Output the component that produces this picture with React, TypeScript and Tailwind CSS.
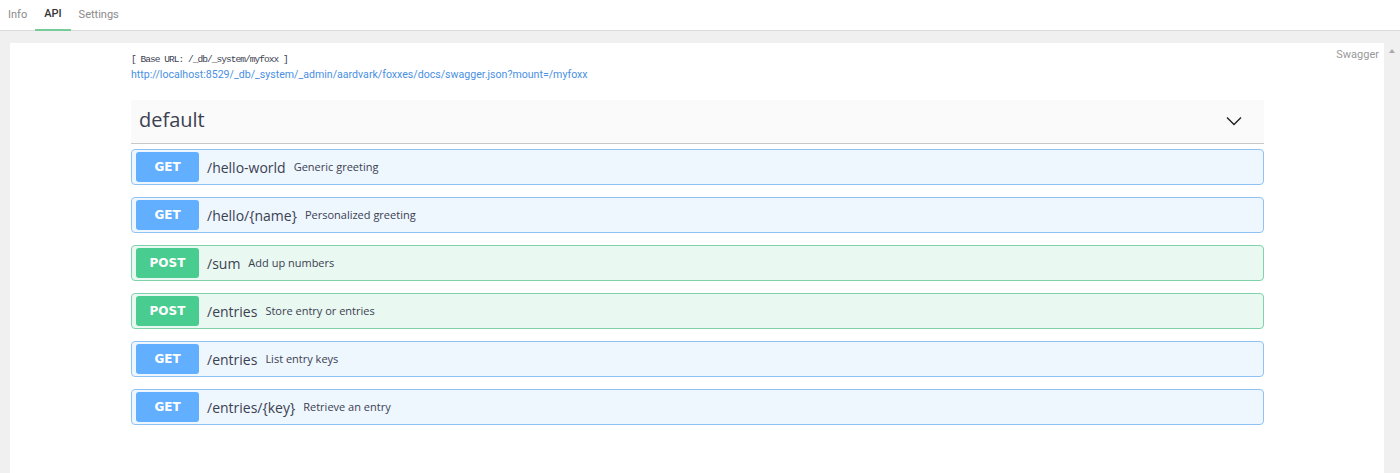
import React from 'react'

type Method = 'GET' | 'POST'

interface Operation {
  method: Method
  path: string
  summary: string
}

const operations: Operation[] = [
  { method: 'GET', path: '/hello-world', summary: 'Generic greeting' },
  { method: 'GET', path: '/hello/{name}', summary: 'Personalized greeting' },
  { method: 'POST', path: '/sum', summary: 'Add up numbers' },
  { method: 'POST', path: '/entries', summary: 'Store entry or entries' },
  { method: 'GET', path: '/entries', summary: 'List entry keys' },
  { method: 'GET', path: '/entries/{key}', summary: 'Retrieve an entry' },
]

function OperationRow({ op }: { op: Operation }) {
  const isGet = op.method === 'GET'
  return (
    <div
      className={`flex items-center h-[36px] mb-[12px] px-[4px] rounded-[4px] border ${
        isGet ? 'bg-[#eef6fe] border-[#8fc3f5]' : 'bg-[#e9f8f0] border-[#7fd3ab]'
      }`}
    >
      <span
        className={`flex items-center justify-center w-[63px] h-[30px] rounded-[3px] text-white text-[12px] font-bold font-['DejaVu_Sans',sans-serif] ${
          isGet ? 'bg-[#61affe]' : 'bg-[#49cc90]'
        }`}
      >
        {op.method}
      </span>
      <span className="ml-[8px] text-[14px] text-[#3b4151] font-['Open_Sans',sans-serif]">
        {op.path}
      </span>
      <span className="ml-[8px] text-[11px] text-[#3b4151] font-['Open_Sans',sans-serif]">
        {op.summary}
      </span>
    </div>
  )
}

export default function App() {
  return (
    <div className="w-[1400px] h-[473px] overflow-hidden bg-[#f0f0f0] flex flex-col font-['Roboto',sans-serif]">
      {/* 탭 바 */}
      <div className="h-[31px] bg-white border-b border-[#dcdcdc] flex items-stretch pl-[8px] text-[11px]">
        <div className="flex items-center text-[#8a8a8a] pr-[8px]">Info</div>
        <div className="flex items-center px-[9px] text-[#333] font-medium border-b-2 border-[#77cb99] -mb-px">
          API
        </div>
        <div className="flex items-center pl-[8px] text-[#8a8a8a]">Settings</div>
      </div>

      <div className="flex flex-1 pt-[12px]">
        <div className="ml-[10px] w-[1374px] bg-white flex">
          <div className="w-[121px]" />
          <div className="flex-1 pt-[11px]">
            <div className="font-['Liberation_Mono',monospace] text-[9.5px] tracking-[-0.95px] text-[#3b4151] leading-[12px]">
              [ Base URL: /_db/_system/myfoxx ]
            </div>
            <div className="text-[10.6px] text-[#4990e2] leading-[14px] mt-[2px]">
              http://localhost:8529/_db/_system/_admin/aardvark/foxxes/docs/swagger.json?mount=/myfoxx
            </div>

            {/* default 섹션 */}
            <div className="mt-[18px] h-[44px] bg-[#fafafa] border-b border-[#c8c8c8] flex items-center justify-between pl-[8px] pr-[22px]">
              <span className="text-[20px] leading-[24px] -mt-[4px] text-[#3b4151] font-['Open_Sans',sans-serif]">default</span>
              <svg width="16" height="10" viewBox="0 0 16 10" fill="none" className="-mt-[2px]">
                <path d="M1 1.5l7 7 7-7" stroke="#222" strokeWidth="1.4" />
              </svg>
            </div>

            <div className="mt-[5px]">
              {operations.map((op, i) => (
                <OperationRow key={i} op={op} />
              ))}
            </div>
          </div>
          <div className="w-[120px] flex justify-end pr-[5px] pt-[5px]">
            <span className="text-[11px] text-[#999] leading-[14px]">Swagger</span>
          </div>
        </div>
        <div className="flex-1 flex justify-center pt-[6px]">
          <svg width="6" height="4" viewBox="0 0 6 4">
            <path d="M3 0l3 4H0z" fill="#aaa" />
          </svg>
        </div>
      </div>
    </div>
  )
}
